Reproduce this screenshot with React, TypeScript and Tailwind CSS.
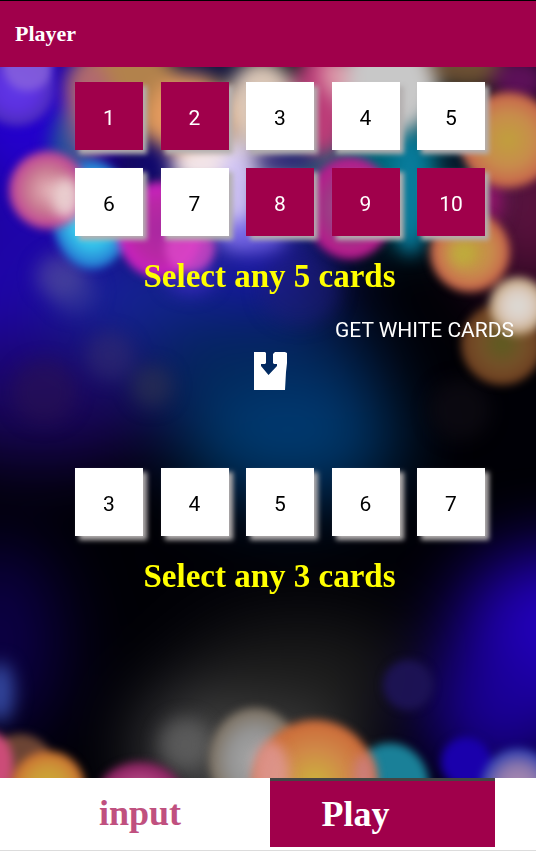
import { useState } from "react";

type Blob = { x: number; y: number; rx: number; ry?: number; fill: string; o?: number };

/* Wide washes of colour behind the lights */
const washes: Blob[] = [
  { x: 30, y: 110, rx: 110, ry: 90, fill: "#2400d0" },
  { x: 30, y: 290, rx: 140, ry: 110, fill: "#1e04a8" },
  { x: 180, y: 310, rx: 130, ry: 75, fill: "#152496" },
  { x: 40, y: 400, rx: 130, ry: 60, fill: "#1a0660" },
  { x: 260, y: 260, rx: 70, ry: 50, fill: "#1c14b8" },
  { x: 260, y: 370, rx: 120, ry: 70, fill: "#032458" },
  { x: 290, y: 440, rx: 110, ry: 60, fill: "#003a70" },
  { x: 0, y: 640, rx: 60, ry: 100, fill: "#0c0048" },
  { x: 555, y: 640, rx: 100, ry: 90, fill: "#2400c4" },
  { x: 500, y: 710, rx: 75, ry: 70, fill: "#1a0098" },
  { x: 245, y: 750, rx: 105, ry: 75, fill: "#4a4a4a" },
  { x: 300, y: 670, rx: 110, ry: 50, fill: "#1c1c1c" },
  { x: 530, y: 210, rx: 50, ry: 90, fill: "#6c1448" },
  { x: 390, y: 160, rx: 80, ry: 60, fill: "#00788f" },
  { x: 240, y: 150, rx: 60, ry: 60, fill: "#d8d4f4", o: 0.9 },
];

/* Out-of-focus patches */
const patches: Blob[] = [
  { x: 72, y: 155, rx: 22, ry: 50, fill: "#20509c" },
  { x: 125, y: 90, rx: 60, ry: 48, fill: "#b2824c" },
  { x: 90, y: 110, rx: 24, ry: 50, fill: "#b05c80", o: 0.7 },
  { x: 190, y: 120, rx: 42, ry: 46, fill: "#e89c60" },
  { x: 205, y: 66, rx: 36, ry: 8, fill: "#0c1050" },
  { x: 152, y: 165, rx: 22, ry: 22, fill: "#10086c" },
  { x: 262, y: 105, rx: 34, ry: 44, fill: "#dcc8b8" },
  { x: 215, y: 165, rx: 44, ry: 24, fill: "#f2e4e8" },
  { x: 236, y: 200, rx: 18, ry: 50, fill: "#ccc0f4" },
  { x: 322, y: 100, rx: 28, ry: 56, fill: "#bc3c78" },
  { x: 388, y: 85, rx: 50, ry: 50, fill: "#c8c8c8" },
  { x: 335, y: 75, rx: 14, ry: 20, fill: "#dc98a8" },
  { x: 410, y: 195, rx: 20, ry: 60, fill: "#087c9c" },
  { x: 468, y: 66, rx: 38, ry: 22, fill: "#6c5034" },
  { x: 520, y: 80, rx: 28, ry: 24, fill: "#5c1058" },
  { x: 284, y: 160, rx: 34, ry: 8, fill: "#18086c" },
  { x: 458, y: 163, rx: 20, ry: 10, fill: "#020c1c" },
  { x: 490, y: 200, rx: 12, ry: 24, fill: "#9c1470" },
  { x: 60, y: 276, rx: 24, ry: 22, fill: "#58509c", o: 0.6 },
  { x: 74, y: 292, rx: 24, ry: 22, fill: "#484c98", o: 0.4 },
  { x: 250, y: 236, rx: 36, ry: 16, fill: "#7060e4", o: 0.9 },
  { x: 190, y: 276, rx: 25, ry: 18, fill: "#3c2cc0", o: 0.8 },
  { x: 300, y: 290, rx: 40, ry: 35, fill: "#20207c", o: 0.5 },
  { x: 0, y: 692, rx: 14, ry: 30, fill: "#3448a0" },
  { x: 185, y: 744, rx: 26, ry: 26, fill: "#686868", o: 0.7 },
  { x: 110, y: 356, rx: 24, fill: "#383070", o: 0.5 },
  { x: 152, y: 386, rx: 21, fill: "#303450", o: 0.6 },
  { x: 44, y: 392, rx: 32, fill: "#2c1450", o: 0.5 },
  { x: 460, y: 410, rx: 30, fill: "#0e0c14", o: 0.7 },
];

/* Rounder lights with a readable edge */
const bokeh: Blob[] = [
  { x: 17, y: 88, rx: 38, fill: "url(#violet)" },
  { x: 28, y: 66, rx: 25, fill: "#8a64dc", o: 0.8 },
  { x: 92, y: 215, rx: 40, ry: 54, fill: "url(#cyan)" },
  { x: 48, y: 190, rx: 39, fill: "url(#rose)" },
  { x: 160, y: 230, rx: 43, ry: 48, fill: "url(#magenta)" },
  { x: 190, y: 248, rx: 25, fill: "#dc48c8", o: 0.8 },
  { x: 350, y: 208, rx: 44, ry: 51, fill: "url(#wine)" },
  { x: 508, y: 140, rx: 48, fill: "url(#orange)" },
  { x: 470, y: 252, rx: 40, fill: "url(#orange)" },
  { x: 502, y: 344, rx: 41, fill: "url(#brown)" },
  { x: 518, y: 306, rx: 29, fill: "url(#cream)" },
  { x: 408, y: 685, rx: 25, fill: "#1e1458", o: 0.9 },
  { x: 255, y: 760, rx: 46, ry: 52, fill: "url(#pearl)" },
  { x: 390, y: 786, rx: 39, ry: 43, fill: "#1a8098" },
  { x: 315, y: 784, rx: 62, ry: 64, fill: "url(#sunset)" },
  { x: 466, y: 762, rx: 25, fill: "#1a00ac" },
  { x: 518, y: 788, rx: 38, ry: 40, fill: "url(#haze)" },
  { x: 20, y: 772, rx: 36, ry: 38, fill: "#6c4434" },
  { x: 48, y: 788, rx: 37, fill: "url(#gold)" },
  { x: 140, y: 794, rx: 42, ry: 32, fill: "url(#plum)" },
  { x: -8, y: 764, rx: 21, ry: 32, fill: "#cc4c78" },
];

/* Places where two lights overlap */
const overlaps: Blob[] = [
  { x: 66, y: 198, rx: 14, ry: 20, fill: "#f0e0dc", o: 0.8 },
  { x: 271, y: 775, rx: 18, ry: 34, fill: "#e09898", o: 0.8 },
  { x: 364, y: 776, rx: 10, ry: 22, fill: "#cc8088", o: 0.8 },
  { x: 462, y: 254, rx: 12, fill: "#bcb838", o: 0.6 },
];

const gradients: { id: string; stops: [string, string, string] }[] = [
  { id: "violet", stops: ["#6038e8", "#5c30e0", "#4c2cb8"] },
  { id: "cyan", stops: ["#70d8f4", "#34c8ec", "#2470d0"] },
  { id: "rose", stops: ["#e4b4b8", "#c87890", "#c03c98"] },
  { id: "magenta", stops: ["#a828a0", "#b828a4", "#cc20c4"] },
  { id: "wine", stops: ["#a05c90", "#9c3884", "#c01490"] },
  { id: "orange", stops: ["#c0a03c", "#c88c4c", "#c8604c"] },
  { id: "brown", stops: ["#5c5c20", "#745028", "#6c3c20"] },
  { id: "cream", stops: ["#dcdcd8", "#dcccc0", "#bc9c74"] },
  { id: "pearl", stops: ["#a8a8a8", "#949494", "#7c7060"] },
  { id: "sunset", stops: ["#ccb43c", "#d08848", "#cc6838"] },
  { id: "haze", stops: ["#b490b4", "#8c78ac", "#2838b0"] },
  { id: "gold", stops: ["#ccac34", "#cc9838", "#cc6c30"] },
  { id: "plum", stops: ["#c08098", "#a83878", "#84205c"] },
];

function Blobs({ items, filter }: { items: Blob[]; filter: string }) {
  return (
    <g filter={filter}>
      {items.map((b, i) => (
        <ellipse key={i} cx={b.x} cy={b.y} rx={b.rx} ry={b.ry ?? b.rx} fill={b.fill} opacity={b.o ?? 1} />
      ))}
    </g>
  );
}

function Backdrop() {
  return (
    <svg
      className="absolute inset-0 h-full w-full"
      viewBox="0 67 536 711"
      preserveAspectRatio="xMidYMid slice"
      aria-hidden="true"
    >
      <defs>
        {gradients.map((g) => (
          <radialGradient key={g.id} id={g.id}>
            <stop offset="0" stopColor={g.stops[0]} />
            <stop offset="0.55" stopColor={g.stops[1]} />
            <stop offset="1" stopColor={g.stops[2]} />
          </radialGradient>
        ))}
        <filter id="wide" x="-30%" y="-30%" width="160%" height="160%" colorInterpolationFilters="sRGB">
          <feGaussianBlur stdDeviation="36" />
        </filter>
        <filter id="mid" x="-20%" y="-20%" width="140%" height="140%" colorInterpolationFilters="sRGB">
          <feGaussianBlur stdDeviation="9" />
        </filter>
        <filter id="soft" x="-10%" y="-10%" width="120%" height="120%" colorInterpolationFilters="sRGB">
          <feGaussianBlur stdDeviation="4" />
        </filter>
        <filter id="blend" x="-10%" y="-10%" width="120%" height="120%" colorInterpolationFilters="sRGB">
          <feGaussianBlur stdDeviation="6" />
        </filter>
      </defs>
      <rect x="-500" y="-500" width="1600" height="2000" fill="#000006" />
      <Blobs items={washes} filter="url(#wide)" />
      <Blobs items={patches} filter="url(#mid)" />
      <Blobs items={bokeh} filter="url(#soft)" />
      <Blobs items={overlaps} filter="url(#blend)" />
    </svg>
  );
}

function Card({ value, active, onClick }: { value: number; active?: boolean; onClick?: () => void }) {
  return (
    <button
      type="button"
      aria-pressed={!!active}
      onClick={onClick}
      className={
        "flex size-[68px] items-center justify-center pt-1 text-[21px] leading-6 shadow-[4px_4px_5px_#b4b0b0] " +
        (active ? "bg-[#a0004b] text-white" : "bg-white text-black")
      }
    >
      {value}
    </button>
  );
}

export default function App() {
  const [picked, setPicked] = useState<number[]>([1, 2, 8, 9, 10]);
  const [white, setWhite] = useState<number[]>([3, 4, 5, 6, 7]);
  const toggle = (n: number) =>
    setPicked((p) => (p.includes(n) ? p.filter((v) => v !== n) : [...p, n]));
  const getWhite = () =>
    setWhite([1, 2, 3, 4, 5, 6, 7, 8, 9, 10].filter((n) => !picked.includes(n)));

  return (
    <div className="flex min-h-screen flex-col bg-black font-['Roboto','Liberation_Sans',sans-serif]">
      <header className="flex h-[67px] items-center border-t border-black bg-[#a0004b] px-[15px]">
        <h1 className="font-['Liberation_Serif',serif] text-[22px] leading-7 font-bold text-white">Player</h1>
      </header>

      <main className="relative isolate flex-1 overflow-hidden">
        <div className="absolute inset-0 -z-10">
          <Backdrop />
        </div>
        <div className="flex flex-col gap-[18px] pt-[15px] pr-[51px] pl-[75px]">
          {[[1, 2, 3, 4, 5], [6, 7, 8, 9, 10]].map((row) => (
            <div key={row[0]} className="flex justify-between">
              {row.map((n) => (
                <Card key={n} value={n} active={picked.includes(n)} onClick={() => toggle(n)} />
              ))}
            </div>
          ))}
        </div>
        <h2 className="mt-5 pl-[3px] text-center font-['Liberation_Serif',serif] text-[33px] leading-10 font-bold text-[#ffff00]">
          Select any 5 cards
        </h2>
        <div className="mt-5 flex justify-end pr-[22px]">
          <button type="button" onClick={getWhite} className="text-[21px] leading-7 text-white">
            GET WHITE CARDS
          </button>
        </div>
        <div className="mt-2 flex justify-center pl-[5px]">
          <svg className="h-[38px] w-[34px]" viewBox="0 0 34 38" aria-hidden="true">
            <path
              d="M0 0H11L12 1V11L11 12H7V14L14.500 23L23 14V12H20L19 11V2L21 0H31L33 1V11L32 20L31 38H0Z"
              fill="#ffffff"
            />
          </svg>
        </div>
        <div className="mt-[78px] flex justify-between pr-[51px] pl-[75px]">
          {white.slice(0, 5).map((n) => (
            <Card key={n} value={n} />
          ))}
        </div>
        <h2 className="mt-5 pl-[3px] text-center font-['Liberation_Serif',serif] text-[33px] leading-10 font-bold text-[#ffff00]">
          Select any 3 cards
        </h2>
      </main>

      <nav className="grid h-[73px] grid-cols-2 border-b border-[#dcdcdc] bg-white pb-[3px] font-['Liberation_Serif',serif] text-[36px] leading-10 font-bold">
        <button type="button" className="pl-3 text-[#c0507f]">
          input
        </button>
        <div className="flex pr-[41px] pl-[2px]">
          <button type="button" className="flex-1 border-t-[3px] border-[#444444] bg-[#a0004b] pr-[54px] text-white">
            Play
          </button>
        </div>
      </nav>
    </div>
  );
}
